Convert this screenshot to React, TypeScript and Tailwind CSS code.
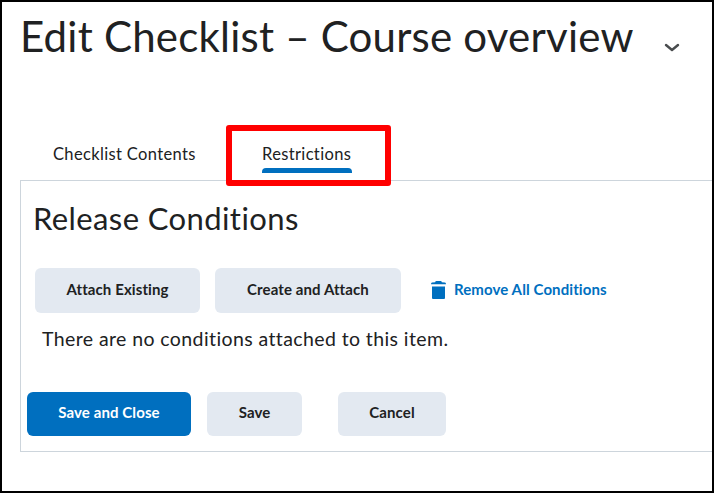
import React from "react";

interface ActionButtonProps {
  label: string;
  className: string;
  primary?: boolean;
}

function ActionButton({ label, className, primary }: ActionButtonProps) {
  const colors = primary
    ? "bg-[#006fbf] text-white"
    : "bg-[#e3e9f1] text-[#202122]";
  return (
    <button
      className={`flex items-center justify-center rounded-md pb-[3px] text-[15px] tracking-[0.1px] font-bold whitespace-nowrap ${colors} ${className}`}
    >
      {label}
    </button>
  );
}

function TrashIcon() {
  return (
    <svg className="w-[15px] h-[18px] fill-current" viewBox="0 0 15 18">
      <path d="M4.2 1.3Q4.2 0 5.5 0H9.5Q10.8 0 10.8 1.3L14 1.5Q15 1.7 15 3.2H0Q0 1.7 1 1.5Z" />
      <path d="M1 5.4H14V16.9Q14 18 12.9 18H2.1Q1 18 1 16.9Z" />
    </svg>
  );
}

export default function App() {
  return (
    <div className="w-[714px] h-[494px] bg-white pb-px">
      <div
        className="relative flex flex-col h-[493px] border-2 border-black pl-[18px] text-[#202122] overflow-hidden"
        style={{ fontFamily: "Lato, sans-serif" }}
      >
        <header className="flex h-[74px] shrink-0">
          <h1 className="w-[640px] text-[42px] leading-[68px] tracking-[0.22px] whitespace-nowrap">
            Edit Checklist – Course overview
          </h1>
          <svg
            className="mt-[41px] ml-[4px] w-4 h-[10px] fill-none stroke-[#494c4e] stroke-[2.4]"
            viewBox="0 0 16 10"
          >
            <path d="M2 2L8 7L14 2" strokeLinecap="round" strokeLinejoin="round" />
          </svg>
        </header>

        {/* Tabs */}
        <nav className="flex h-[104px] shrink-0 items-end pb-[7px] pl-[33px] text-[16.5px] tracking-[0.35px]">
          <div className="w-[209px] pb-[9px] leading-5">Checklist Contents</div>
          <div className="w-[90px]">
            <div className="pb-[4px] leading-5 whitespace-nowrap">Restrictions</div>
            <div className="h-[5px] rounded-t bg-[#006fbf]" />
          </div>
        </nav>

        {/* Tab panel */}
        <section className="h-[272px] shrink-0 border border-r-0 border-[#cdd5dc]">
          <h2 className="h-[87px] pl-3 text-[31px] leading-[75px] tracking-[0.4px] whitespace-nowrap">
            Release Conditions
          </h2>
          <div className="flex items-center pl-[14px]">
            <ActionButton label="Attach Existing" className="w-[165px] h-[45px]" />
            <ActionButton label="Create and Attach" className="ml-[15px] w-[186px] h-[45px]" />
            <button className="flex items-center ml-[30px] pb-px gap-2 text-[15px] tracking-[0.1px] font-bold text-[#006fbf] whitespace-nowrap">
              <TrashIcon />
              <span className="pb-[2px]">Remove All Conditions</span>
            </button>
          </div>
          <p className="h-[79px] pl-[21px] pt-[12px] text-[19.5px] leading-7 tracking-[0.4px] whitespace-nowrap">
            There are no conditions attached to this item.
          </p>
          <div className="flex pl-[6px]">
            <ActionButton label="Save and Close" className="w-[164px] h-[44px]" primary />
            <ActionButton label="Save" className="ml-[16px] w-[95px] h-[44px]" />
            <ActionButton label="Cancel" className="ml-[36px] w-[108px] h-[44px]" />
          </div>
        </section>

        {/* Highlight around the active tab */}
        <div className="absolute left-[224px] top-[123px] w-[165px] h-[61px] rounded-[3px] border-6 border-[#ff0000]" />
      </div>
    </div>
  );
}
